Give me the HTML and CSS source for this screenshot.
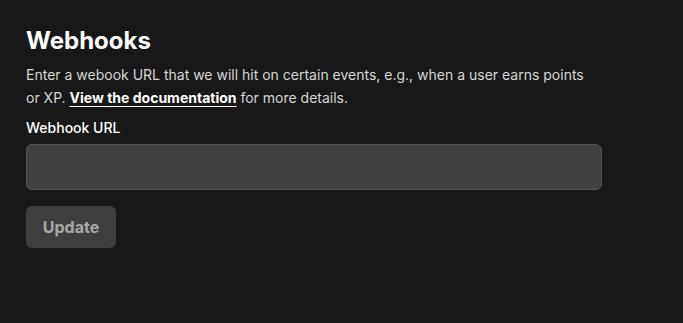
FILE: index.html
```html
<!DOCTYPE html>
<html>
<head>
<meta charset="utf-8">
<link rel="stylesheet" href="styles.css">
</head>
<body>
<section class="panel">
  <h1 class="title">Webhooks</h1>
  <p class="desc">Enter a webook URL that we will hit on certain events, e.g., when a user earns points or XP. <a class="doc-link" href="#">View the documentation</a> for more details.</p>
  <label class="label" for="url">Webhook URL</label>
  <input class="input" id="url" type="text">
  <button class="btn" type="button">Update</button>
</section>
</body>
</html>
```
FILE: styles.css
```css
html, body {
  margin: 0;
  background: #181818;
  height: 100%;
}
body {
  font-family: Inter, "Noto Sans", sans-serif;
  color: #d4d4d4;
}
.panel {
  padding: 26px 26px;
  width: 576px;
  display: flex;
  flex-direction: column;
  align-items: flex-start;
}
.title {
  margin: 0;
  font-size: 24px;
  line-height: 30px;
  font-weight: 700;
  color: #ffffff;
}
.desc {
  margin: 7px 0 0;
  max-width: 565px;
  font-size: 14px;
  line-height: 23px;
  color: #d6d6d6;
}
.doc-link {
  color: #ffffff;
  font-weight: 700;
  text-decoration: underline;
  text-underline-offset: 3px;
}
.label {
  margin-top: 9px;
  font-size: 14px;
  line-height: 20px;
  font-weight: 500;
  color: #ffffff;
}
.input {
  margin-top: 6px;
  box-sizing: border-box;
  width: 576px;
  height: 46px;
  background: #414141;
  border: 1px solid #555555;
  border-radius: 6px;
  outline: none;
}
.btn {
  margin-top: 16px;
  width: 90px;
  height: 42px;
  background: #3f3f3f;
  border: none;
  border-radius: 6px;
  color: #a8a8a8;
  font-family: Inter, sans-serif;
  font-size: 16px;
  font-weight: 700;
}
```
